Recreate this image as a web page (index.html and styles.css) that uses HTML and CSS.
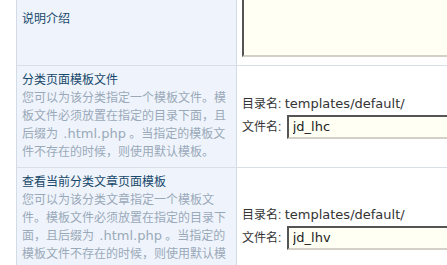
FILE: index.html
```html
<!DOCTYPE html>
<html>
<head>
<meta charset="utf-8">
<link rel="stylesheet" href="styles.css">
</head>
<body>
<div class="table">
  <div class="row row-intro">
    <div class="cell-left intro-label">
      <div class="title">说明介绍</div>
    </div>
    <div class="cell-right intro-right">
      <textarea class="textarea"></textarea>
    </div>
  </div>
  <div class="row">
    <div class="cell-left">
      <div class="title">分类页面模板文件</div>
      <div class="desc">您可以为该分类指定一个模板文件。模板文件必须放置在指定的目录下面，且后缀为 <span class="en">.html.php</span> 。当指定的模板文件不存在的时候，则使用默认模板。</div>
    </div>
    <div class="cell-right">
      <div class="form">
        <div class="line">目录名: <span class="en">templates/default/</span></div>
        <div class="line">文件名: <input class="input" type="text" value="jd_lhc"></div>
      </div>
    </div>
  </div>
  <div class="row">
    <div class="cell-left">
      <div class="title">查看当前分类文章页面模板</div>
      <div class="desc">您可以为该分类文章指定一个模板文件。模板文件必须放置在指定的目录下面，且后缀为 <span class="en">.html.php</span> 。当指定的模板文件不存在的时候，则使用默认模板。</div>
    </div>
    <div class="cell-right">
      <div class="form">
        <div class="line">目录名: <span class="en">templates/default/</span></div>
        <div class="line">文件名: <input class="input" type="text" value="jd_lhv"></div>
      </div>
    </div>
  </div>
</div>
</body>
</html>
```

FILE: styles.css
```css
html, body {
  margin: 0;
  padding: 0;
  background: #ffffff;
  overflow: hidden;
  width: 447px;
  height: 265px;
}
body {
  font-family: "Liberation Sans", "Noto Sans CJK SC", sans-serif;
  font-size: 12px;
  color: #333333;
}
.table {
  margin-left: 16px;
  border-left: 1px solid #d3dbe4;
  width: 600px;
}
.row {
  display: grid;
  grid-template-columns: 220px 1fr;
  border-bottom: 1px solid #d9dfe6;
}
.cell-left {
  background: #eff4fc;
  border-right: 1px solid #d3dbe4;
  padding: 5px 10px 6px 5px;
  line-height: 18px;
}
.intro-label {
  padding-top: 10px;
  height: 65px;
  box-sizing: border-box;
}
.title {
  color: #17486b;
}
.desc {
  color: #9aa9b9;
  line-break: strict;
}
.en {
  font-family: "DejaVu Sans", sans-serif;
  font-size: 13px;
  line-height: 1;
}
.desc .en {
  margin-left: 2px;
}
.cell-right {
  display: flex;
  align-items: center;
  padding-left: 5px;
}
.intro-right {
  align-items: flex-end;
  padding-bottom: 8px;
  overflow: hidden;
}
.textarea {
  display: block;
  width: 260px;
  height: 66px;
  margin: 0;
  margin-top: -10px;
  box-sizing: border-box;
  background: #fffff4;
  border-style: solid;
  border-width: 2px;
  border-color: #555555 #d4d0c8 #d4d0c8 #555555;
  resize: none;
}
.form {
  display: flex;
  flex-direction: column;
  gap: 2px;
}
.line {
  display: flex;
  align-items: center;
  line-height: 18px;
  white-space: pre;
}
.input {
  width: 200px;
  height: 24px;
  box-sizing: border-box;
  margin: 0 0 0 2px;
  padding: 0 4px;
  background: #fffff4;
  border-style: solid;
  border-width: 2px;
  border-color: #555555 #d4d0c8 #d4d0c8 #555555;
  font-family: "DejaVu Sans", sans-serif;
  font-size: 13px;
  color: #222222;
}
```
